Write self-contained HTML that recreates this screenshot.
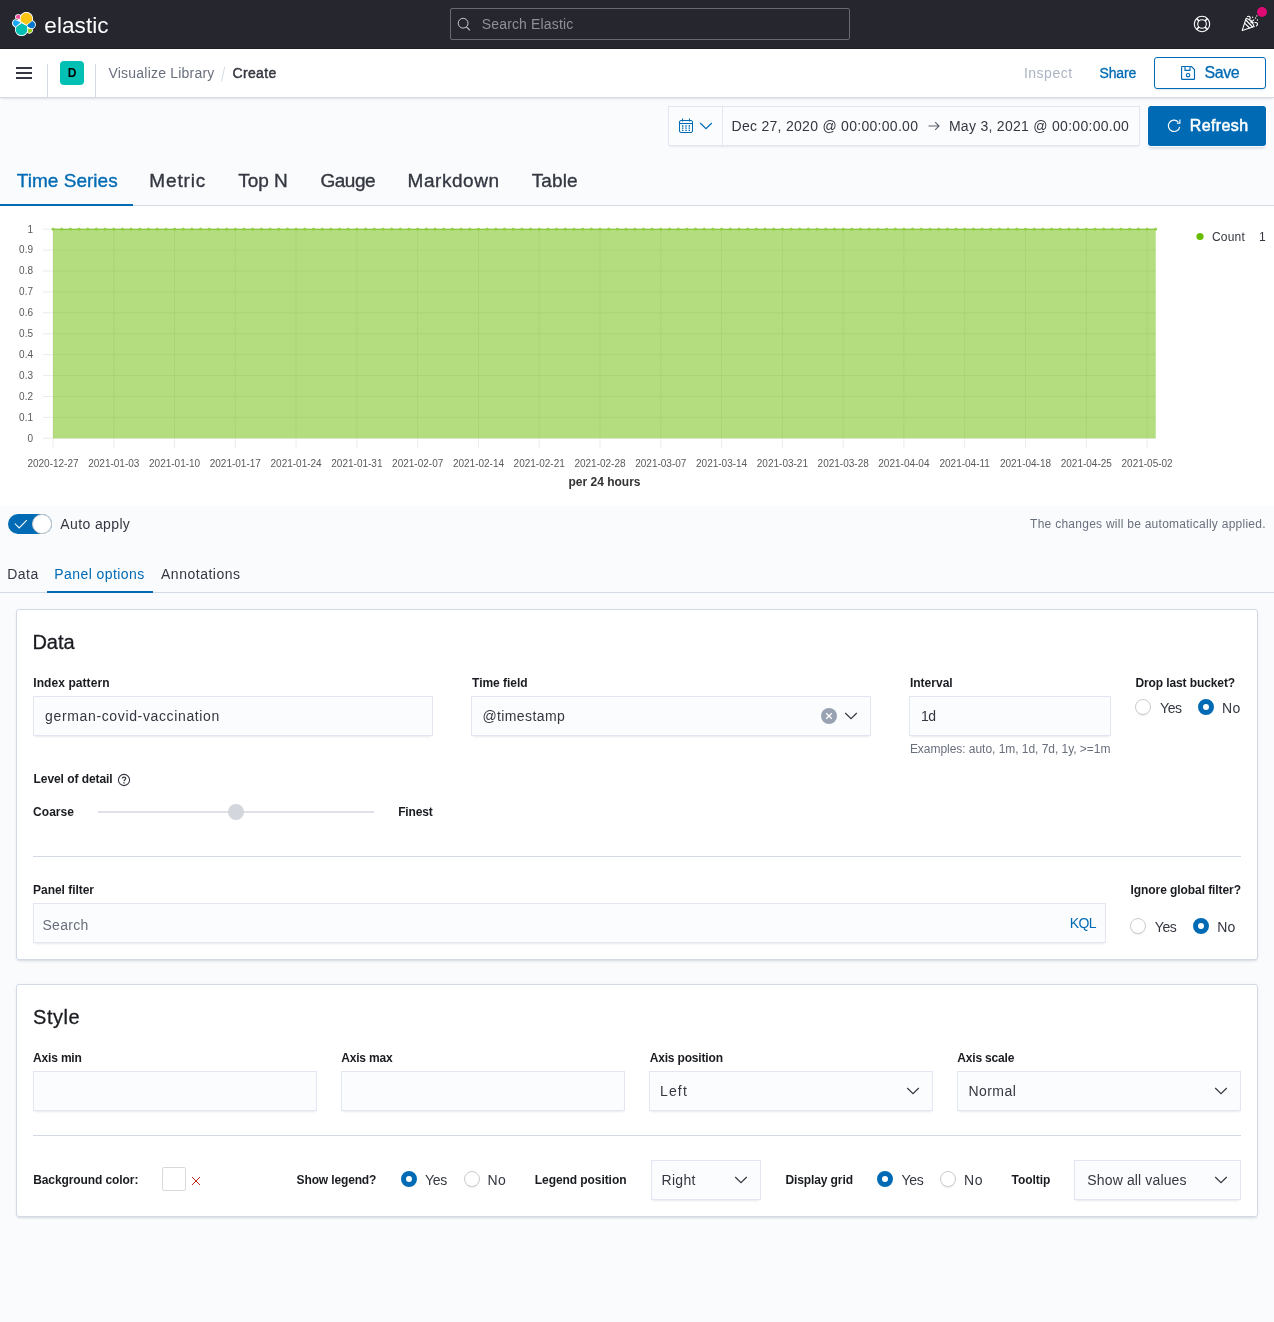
<!DOCTYPE html>
<html><head><meta charset="utf-8"><title>Kibana</title>
<style>
*{box-sizing:border-box;margin:0;padding:0}
html,body{width:1274px;height:1322px;overflow:hidden}
body{font-family:"Liberation Sans",sans-serif;background:#fafbfd;color:#343741;font-size:14px;position:relative}
.abs{position:absolute}
.t{position:absolute;white-space:nowrap;line-height:1}
#top{left:0;top:0;width:1274px;height:49px;background:#25262e;border-bottom:1px solid #1e1f25}
#sub{left:0;top:49px;width:1274px;height:49px;background:#fff;border-bottom:1px solid #d3dae6;box-shadow:0 2px 2px -1px rgba(152,162,179,.3)}
.inp{position:absolute;height:40px;background:#fbfcfd;box-shadow:0 1px 1px -1px rgba(152,162,179,.2),0 3px 2px -2px rgba(152,162,179,.2),inset 0 0 0 1px rgba(19,34,149,.1)}
.panel{position:absolute;background:#fff;border:1px solid #d3dae6;border-radius:3px;box-shadow:0 2px 2px -1px rgba(152,162,179,.3),0 1px 5px -2px rgba(152,162,179,.3)}
.hr{position:absolute;height:1px;background:#d3dae6}
.radio{position:absolute;width:16px;height:16px;border-radius:50%;border:1px solid #c9cbcd;background:#fff;box-shadow:0 1px 1px -1px rgba(152,162,179,.2),0 3px 2px -2px rgba(152,162,179,.2)}
.radio.on{border:5px solid #006bb4;box-shadow:none;background:#fff}
#root{position:absolute;left:0;top:0;width:1274px;height:1322px;will-change:transform}
</style></head><body><div id="root">

<!-- TOP DARK HEADER -->
<div id="top" class="abs"></div>
<div class="abs" style="left:450px;top:8px;width:400px;height:32px;border:1px solid #696a70;border-radius:2px;background:#25262e"></div>

<!-- SUB HEADER -->
<div id="sub" class="abs"></div>
<div class="abs" style="left:16px;top:67px;width:16px;height:2px;background:#343741;box-shadow:0 5px 0 #343741,0 10px 0 #343741"></div>
<div class="abs" style="left:47px;top:64px;width:1px;height:33px;background:#d3dae6"></div>
<div class="abs" style="left:95px;top:64px;width:1px;height:33px;background:#d3dae6"></div>
<div class="abs" style="left:60px;top:61px;width:24px;height:24px;border-radius:4px;background:#00bfb3"></div>
<div class="t" style="left:67.7px;top:67px;font-size:12px;font-weight:700;color:#000">D</div>
<svg class="abs" style="left:220px;top:66px" width="6" height="16" viewBox="0 0 6 16"><path d="M4.7 0.8 L1.5 15.7" stroke="#d3dae6" stroke-width="1"/></svg>
<div class="abs" style="left:1154px;top:57px;width:112px;height:32px;border:1px solid #006bb4;border-radius:3px;background:#fff;box-shadow:0 2px 2px -1px rgba(54,97,126,.15)"></div>

<!-- DATE PICKER -->
<div class="abs" style="left:668px;top:106px;width:472px;height:40px;background:#fbfcfd;box-shadow:0 1px 1px -1px rgba(152,162,179,.2),0 3px 2px -2px rgba(152,162,179,.2),inset 0 0 0 1px rgba(19,34,149,.1)"></div>
<div class="abs" style="left:722px;top:107px;width:1px;height:38px;background:rgba(19,34,149,.1)"></div>
<svg class="abs" style="left:927px;top:120px" width="14" height="12" viewBox="0 0 14 12" fill="none" stroke="#5a606b" stroke-width="1.1"><path d="M1.5 6 H12 M8.2 2.2 L12 6 L8.2 9.8"/></svg>
<div class="abs" style="left:1148px;top:106px;width:118px;height:40px;border-radius:3px;background:#006bb4;box-shadow:0 0 0 1px rgba(255,255,255,.9),0 3px 3px -1px rgba(54,97,126,.25)"></div>

<!-- VIS TABS -->
<div class="hr" style="left:0;top:205px;width:1274px"></div>
<div class="abs" style="left:0;top:204px;width:133px;height:2px;background:#006bb4"></div>

<!-- CHART BG -->
<div class="abs" style="left:0;top:206px;width:1274px;height:300px;background:#fff"></div>

<!-- AUTO APPLY -->
<div class="abs" style="left:8px;top:514px;width:44px;height:20px;border-radius:10px;background:#006bb4"></div>
<div class="abs" style="left:32px;top:514px;width:20px;height:20px;border-radius:10px;background:#fff;border:1px solid #c9cbcd"></div>
<svg class="abs" style="left:13px;top:518px" width="16" height="12" viewBox="0 0 16 12"><path d="M1.8 5.5 L6.2 9.9 L13.8 2.1" fill="none" stroke="#fff" stroke-width="1.05"/></svg>

<!-- SUB TABS -->
<div class="hr" style="left:0;top:592px;width:1274px"></div>
<div class="abs" style="left:47px;top:591px;width:106px;height:2px;background:#006bb4"></div>

<!-- DATA PANEL -->
<div class="panel" style="left:16px;top:609px;width:1242px;height:351px"></div>
<div class="inp" style="left:33px;top:696px;width:400px"></div>
<div class="inp" style="left:471px;top:696px;width:400px"></div>
<div class="inp" style="left:909px;top:696px;width:202px"></div>
<div class="radio" style="left:1135px;top:699px"></div>
<div class="radio on" style="left:1198px;top:699px"></div>
<div class="abs" style="left:98px;top:811px;width:276px;height:2px;background:#dfe1e6"></div>
<div class="abs" style="left:228px;top:804px;width:16px;height:16px;border-radius:8px;background:#d3d6dc"></div>
<div class="hr" style="left:33px;top:856px;width:1208px"></div>
<div class="inp" style="left:33px;top:903px;width:1073px;height:40px"></div>
<div class="radio" style="left:1130px;top:918px"></div>
<div class="radio on" style="left:1193px;top:918px"></div>

<!-- STYLE PANEL -->
<div class="panel" style="left:16px;top:984px;width:1242px;height:233px"></div>
<div class="inp" style="left:33px;top:1071px;width:284px"></div>
<div class="inp" style="left:341px;top:1071px;width:284px"></div>
<div class="inp" style="left:649px;top:1071px;width:284px"></div>
<div class="inp" style="left:957px;top:1071px;width:284px"></div>
<div class="hr" style="left:33px;top:1135px;width:1208px"></div>
<div class="abs" style="left:162px;top:1167px;width:24px;height:24px;border:1px solid #d9d9d9;border-radius:2px;background:#fff"></div>
<div class="radio on" style="left:401px;top:1171px"></div>
<div class="radio" style="left:464px;top:1171px"></div>
<div class="inp" style="left:651px;top:1160px;width:110px"></div>
<div class="radio on" style="left:877px;top:1171px"></div>
<div class="radio" style="left:940px;top:1171px"></div>
<div class="inp" style="left:1074px;top:1160px;width:167px"></div>

<svg class="abs" style="left:0;top:206px" width="1274" height="300" viewBox="0 206 1274 300" font-family="Liberation Sans, sans-serif">
<line x1="43" x2="1155.7" y1="229.2" y2="229.2" stroke="#ececec" stroke-width="1"/>
<line x1="43" x2="1155.7" y1="250.1" y2="250.1" stroke="#ececec" stroke-width="1"/>
<line x1="43" x2="1155.7" y1="271.0" y2="271.0" stroke="#ececec" stroke-width="1"/>
<line x1="43" x2="1155.7" y1="291.9" y2="291.9" stroke="#ececec" stroke-width="1"/>
<line x1="43" x2="1155.7" y1="312.8" y2="312.8" stroke="#ececec" stroke-width="1"/>
<line x1="43" x2="1155.7" y1="333.8" y2="333.8" stroke="#ececec" stroke-width="1"/>
<line x1="43" x2="1155.7" y1="354.7" y2="354.7" stroke="#ececec" stroke-width="1"/>
<line x1="43" x2="1155.7" y1="375.6" y2="375.6" stroke="#ececec" stroke-width="1"/>
<line x1="43" x2="1155.7" y1="396.5" y2="396.5" stroke="#ececec" stroke-width="1"/>
<line x1="43" x2="1155.7" y1="417.4" y2="417.4" stroke="#ececec" stroke-width="1"/>
<line x1="43" x2="1155.7" y1="438.3" y2="438.3" stroke="#ececec" stroke-width="1"/>
<line x1="53.0" x2="53.0" y1="229.2" y2="448.3" stroke="#ececec" stroke-width="1"/>
<line x1="113.8" x2="113.8" y1="229.2" y2="448.3" stroke="#ececec" stroke-width="1"/>
<line x1="174.6" x2="174.6" y1="229.2" y2="448.3" stroke="#ececec" stroke-width="1"/>
<line x1="235.3" x2="235.3" y1="229.2" y2="448.3" stroke="#ececec" stroke-width="1"/>
<line x1="296.1" x2="296.1" y1="229.2" y2="448.3" stroke="#ececec" stroke-width="1"/>
<line x1="356.9" x2="356.9" y1="229.2" y2="448.3" stroke="#ececec" stroke-width="1"/>
<line x1="417.7" x2="417.7" y1="229.2" y2="448.3" stroke="#ececec" stroke-width="1"/>
<line x1="478.5" x2="478.5" y1="229.2" y2="448.3" stroke="#ececec" stroke-width="1"/>
<line x1="539.2" x2="539.2" y1="229.2" y2="448.3" stroke="#ececec" stroke-width="1"/>
<line x1="600.0" x2="600.0" y1="229.2" y2="448.3" stroke="#ececec" stroke-width="1"/>
<line x1="660.8" x2="660.8" y1="229.2" y2="448.3" stroke="#ececec" stroke-width="1"/>
<line x1="721.6" x2="721.6" y1="229.2" y2="448.3" stroke="#ececec" stroke-width="1"/>
<line x1="782.4" x2="782.4" y1="229.2" y2="448.3" stroke="#ececec" stroke-width="1"/>
<line x1="843.2" x2="843.2" y1="229.2" y2="448.3" stroke="#ececec" stroke-width="1"/>
<line x1="903.9" x2="903.9" y1="229.2" y2="448.3" stroke="#ececec" stroke-width="1"/>
<line x1="964.7" x2="964.7" y1="229.2" y2="448.3" stroke="#ececec" stroke-width="1"/>
<line x1="1025.5" x2="1025.5" y1="229.2" y2="448.3" stroke="#ececec" stroke-width="1"/>
<line x1="1086.3" x2="1086.3" y1="229.2" y2="448.3" stroke="#ececec" stroke-width="1"/>
<line x1="1147.1" x2="1147.1" y1="229.2" y2="448.3" stroke="#ececec" stroke-width="1"/>
<rect x="53.0" y="229.2" width="1102.7" height="209.1" fill="#68bc00" fill-opacity="0.5"/>
<line x1="53.0" x2="1155.7" y1="229.2" y2="229.2" stroke="#68bc00" stroke-opacity="0.8" stroke-width="1"/>
<circle cx="53.0" cy="229.2" r="1.1" fill="#a5d760" stroke="#7cc522" stroke-width="0.7"/>
<circle cx="61.7" cy="229.2" r="1.1" fill="#a5d760" stroke="#7cc522" stroke-width="0.7"/>
<circle cx="70.4" cy="229.2" r="1.1" fill="#a5d760" stroke="#7cc522" stroke-width="0.7"/>
<circle cx="79.0" cy="229.2" r="1.1" fill="#a5d760" stroke="#7cc522" stroke-width="0.7"/>
<circle cx="87.7" cy="229.2" r="1.1" fill="#a5d760" stroke="#7cc522" stroke-width="0.7"/>
<circle cx="96.4" cy="229.2" r="1.1" fill="#a5d760" stroke="#7cc522" stroke-width="0.7"/>
<circle cx="105.1" cy="229.2" r="1.1" fill="#a5d760" stroke="#7cc522" stroke-width="0.7"/>
<circle cx="113.8" cy="229.2" r="1.1" fill="#a5d760" stroke="#7cc522" stroke-width="0.7"/>
<circle cx="122.5" cy="229.2" r="1.1" fill="#a5d760" stroke="#7cc522" stroke-width="0.7"/>
<circle cx="131.1" cy="229.2" r="1.1" fill="#a5d760" stroke="#7cc522" stroke-width="0.7"/>
<circle cx="139.8" cy="229.2" r="1.1" fill="#a5d760" stroke="#7cc522" stroke-width="0.7"/>
<circle cx="148.5" cy="229.2" r="1.1" fill="#a5d760" stroke="#7cc522" stroke-width="0.7"/>
<circle cx="157.2" cy="229.2" r="1.1" fill="#a5d760" stroke="#7cc522" stroke-width="0.7"/>
<circle cx="165.9" cy="229.2" r="1.1" fill="#a5d760" stroke="#7cc522" stroke-width="0.7"/>
<circle cx="174.6" cy="229.2" r="1.1" fill="#a5d760" stroke="#7cc522" stroke-width="0.7"/>
<circle cx="183.2" cy="229.2" r="1.1" fill="#a5d760" stroke="#7cc522" stroke-width="0.7"/>
<circle cx="191.9" cy="229.2" r="1.1" fill="#a5d760" stroke="#7cc522" stroke-width="0.7"/>
<circle cx="200.6" cy="229.2" r="1.1" fill="#a5d760" stroke="#7cc522" stroke-width="0.7"/>
<circle cx="209.3" cy="229.2" r="1.1" fill="#a5d760" stroke="#7cc522" stroke-width="0.7"/>
<circle cx="218.0" cy="229.2" r="1.1" fill="#a5d760" stroke="#7cc522" stroke-width="0.7"/>
<circle cx="226.7" cy="229.2" r="1.1" fill="#a5d760" stroke="#7cc522" stroke-width="0.7"/>
<circle cx="235.3" cy="229.2" r="1.1" fill="#a5d760" stroke="#7cc522" stroke-width="0.7"/>
<circle cx="244.0" cy="229.2" r="1.1" fill="#a5d760" stroke="#7cc522" stroke-width="0.7"/>
<circle cx="252.7" cy="229.2" r="1.1" fill="#a5d760" stroke="#7cc522" stroke-width="0.7"/>
<circle cx="261.4" cy="229.2" r="1.1" fill="#a5d760" stroke="#7cc522" stroke-width="0.7"/>
<circle cx="270.1" cy="229.2" r="1.1" fill="#a5d760" stroke="#7cc522" stroke-width="0.7"/>
<circle cx="278.8" cy="229.2" r="1.1" fill="#a5d760" stroke="#7cc522" stroke-width="0.7"/>
<circle cx="287.4" cy="229.2" r="1.1" fill="#a5d760" stroke="#7cc522" stroke-width="0.7"/>
<circle cx="296.1" cy="229.2" r="1.1" fill="#a5d760" stroke="#7cc522" stroke-width="0.7"/>
<circle cx="304.8" cy="229.2" r="1.1" fill="#a5d760" stroke="#7cc522" stroke-width="0.7"/>
<circle cx="313.5" cy="229.2" r="1.1" fill="#a5d760" stroke="#7cc522" stroke-width="0.7"/>
<circle cx="322.2" cy="229.2" r="1.1" fill="#a5d760" stroke="#7cc522" stroke-width="0.7"/>
<circle cx="330.9" cy="229.2" r="1.1" fill="#a5d760" stroke="#7cc522" stroke-width="0.7"/>
<circle cx="339.5" cy="229.2" r="1.1" fill="#a5d760" stroke="#7cc522" stroke-width="0.7"/>
<circle cx="348.2" cy="229.2" r="1.1" fill="#a5d760" stroke="#7cc522" stroke-width="0.7"/>
<circle cx="356.9" cy="229.2" r="1.1" fill="#a5d760" stroke="#7cc522" stroke-width="0.7"/>
<circle cx="365.6" cy="229.2" r="1.1" fill="#a5d760" stroke="#7cc522" stroke-width="0.7"/>
<circle cx="374.3" cy="229.2" r="1.1" fill="#a5d760" stroke="#7cc522" stroke-width="0.7"/>
<circle cx="383.0" cy="229.2" r="1.1" fill="#a5d760" stroke="#7cc522" stroke-width="0.7"/>
<circle cx="391.6" cy="229.2" r="1.1" fill="#a5d760" stroke="#7cc522" stroke-width="0.7"/>
<circle cx="400.3" cy="229.2" r="1.1" fill="#a5d760" stroke="#7cc522" stroke-width="0.7"/>
<circle cx="409.0" cy="229.2" r="1.1" fill="#a5d760" stroke="#7cc522" stroke-width="0.7"/>
<circle cx="417.7" cy="229.2" r="1.1" fill="#a5d760" stroke="#7cc522" stroke-width="0.7"/>
<circle cx="426.4" cy="229.2" r="1.1" fill="#a5d760" stroke="#7cc522" stroke-width="0.7"/>
<circle cx="435.1" cy="229.2" r="1.1" fill="#a5d760" stroke="#7cc522" stroke-width="0.7"/>
<circle cx="443.7" cy="229.2" r="1.1" fill="#a5d760" stroke="#7cc522" stroke-width="0.7"/>
<circle cx="452.4" cy="229.2" r="1.1" fill="#a5d760" stroke="#7cc522" stroke-width="0.7"/>
<circle cx="461.1" cy="229.2" r="1.1" fill="#a5d760" stroke="#7cc522" stroke-width="0.7"/>
<circle cx="469.8" cy="229.2" r="1.1" fill="#a5d760" stroke="#7cc522" stroke-width="0.7"/>
<circle cx="478.5" cy="229.2" r="1.1" fill="#a5d760" stroke="#7cc522" stroke-width="0.7"/>
<circle cx="487.1" cy="229.2" r="1.1" fill="#a5d760" stroke="#7cc522" stroke-width="0.7"/>
<circle cx="495.8" cy="229.2" r="1.1" fill="#a5d760" stroke="#7cc522" stroke-width="0.7"/>
<circle cx="504.5" cy="229.2" r="1.1" fill="#a5d760" stroke="#7cc522" stroke-width="0.7"/>
<circle cx="513.2" cy="229.2" r="1.1" fill="#a5d760" stroke="#7cc522" stroke-width="0.7"/>
<circle cx="521.9" cy="229.2" r="1.1" fill="#a5d760" stroke="#7cc522" stroke-width="0.7"/>
<circle cx="530.6" cy="229.2" r="1.1" fill="#a5d760" stroke="#7cc522" stroke-width="0.7"/>
<circle cx="539.2" cy="229.2" r="1.1" fill="#a5d760" stroke="#7cc522" stroke-width="0.7"/>
<circle cx="547.9" cy="229.2" r="1.1" fill="#a5d760" stroke="#7cc522" stroke-width="0.7"/>
<circle cx="556.6" cy="229.2" r="1.1" fill="#a5d760" stroke="#7cc522" stroke-width="0.7"/>
<circle cx="565.3" cy="229.2" r="1.1" fill="#a5d760" stroke="#7cc522" stroke-width="0.7"/>
<circle cx="574.0" cy="229.2" r="1.1" fill="#a5d760" stroke="#7cc522" stroke-width="0.7"/>
<circle cx="582.7" cy="229.2" r="1.1" fill="#a5d760" stroke="#7cc522" stroke-width="0.7"/>
<circle cx="591.3" cy="229.2" r="1.1" fill="#a5d760" stroke="#7cc522" stroke-width="0.7"/>
<circle cx="600.0" cy="229.2" r="1.1" fill="#a5d760" stroke="#7cc522" stroke-width="0.7"/>
<circle cx="608.7" cy="229.2" r="1.1" fill="#a5d760" stroke="#7cc522" stroke-width="0.7"/>
<circle cx="617.4" cy="229.2" r="1.1" fill="#a5d760" stroke="#7cc522" stroke-width="0.7"/>
<circle cx="626.1" cy="229.2" r="1.1" fill="#a5d760" stroke="#7cc522" stroke-width="0.7"/>
<circle cx="634.8" cy="229.2" r="1.1" fill="#a5d760" stroke="#7cc522" stroke-width="0.7"/>
<circle cx="643.4" cy="229.2" r="1.1" fill="#a5d760" stroke="#7cc522" stroke-width="0.7"/>
<circle cx="652.1" cy="229.2" r="1.1" fill="#a5d760" stroke="#7cc522" stroke-width="0.7"/>
<circle cx="660.8" cy="229.2" r="1.1" fill="#a5d760" stroke="#7cc522" stroke-width="0.7"/>
<circle cx="669.5" cy="229.2" r="1.1" fill="#a5d760" stroke="#7cc522" stroke-width="0.7"/>
<circle cx="678.2" cy="229.2" r="1.1" fill="#a5d760" stroke="#7cc522" stroke-width="0.7"/>
<circle cx="686.9" cy="229.2" r="1.1" fill="#a5d760" stroke="#7cc522" stroke-width="0.7"/>
<circle cx="695.5" cy="229.2" r="1.1" fill="#a5d760" stroke="#7cc522" stroke-width="0.7"/>
<circle cx="704.2" cy="229.2" r="1.1" fill="#a5d760" stroke="#7cc522" stroke-width="0.7"/>
<circle cx="712.9" cy="229.2" r="1.1" fill="#a5d760" stroke="#7cc522" stroke-width="0.7"/>
<circle cx="721.6" cy="229.2" r="1.1" fill="#a5d760" stroke="#7cc522" stroke-width="0.7"/>
<circle cx="730.3" cy="229.2" r="1.1" fill="#a5d760" stroke="#7cc522" stroke-width="0.7"/>
<circle cx="739.0" cy="229.2" r="1.1" fill="#a5d760" stroke="#7cc522" stroke-width="0.7"/>
<circle cx="747.6" cy="229.2" r="1.1" fill="#a5d760" stroke="#7cc522" stroke-width="0.7"/>
<circle cx="756.3" cy="229.2" r="1.1" fill="#a5d760" stroke="#7cc522" stroke-width="0.7"/>
<circle cx="765.0" cy="229.2" r="1.1" fill="#a5d760" stroke="#7cc522" stroke-width="0.7"/>
<circle cx="773.7" cy="229.2" r="1.1" fill="#a5d760" stroke="#7cc522" stroke-width="0.7"/>
<circle cx="782.4" cy="229.2" r="1.1" fill="#a5d760" stroke="#7cc522" stroke-width="0.7"/>
<circle cx="791.1" cy="229.2" r="1.1" fill="#a5d760" stroke="#7cc522" stroke-width="0.7"/>
<circle cx="799.7" cy="229.2" r="1.1" fill="#a5d760" stroke="#7cc522" stroke-width="0.7"/>
<circle cx="808.4" cy="229.2" r="1.1" fill="#a5d760" stroke="#7cc522" stroke-width="0.7"/>
<circle cx="817.1" cy="229.2" r="1.1" fill="#a5d760" stroke="#7cc522" stroke-width="0.7"/>
<circle cx="825.8" cy="229.2" r="1.1" fill="#a5d760" stroke="#7cc522" stroke-width="0.7"/>
<circle cx="834.5" cy="229.2" r="1.1" fill="#a5d760" stroke="#7cc522" stroke-width="0.7"/>
<circle cx="843.2" cy="229.2" r="1.1" fill="#a5d760" stroke="#7cc522" stroke-width="0.7"/>
<circle cx="851.8" cy="229.2" r="1.1" fill="#a5d760" stroke="#7cc522" stroke-width="0.7"/>
<circle cx="860.5" cy="229.2" r="1.1" fill="#a5d760" stroke="#7cc522" stroke-width="0.7"/>
<circle cx="869.2" cy="229.2" r="1.1" fill="#a5d760" stroke="#7cc522" stroke-width="0.7"/>
<circle cx="877.9" cy="229.2" r="1.1" fill="#a5d760" stroke="#7cc522" stroke-width="0.7"/>
<circle cx="886.6" cy="229.2" r="1.1" fill="#a5d760" stroke="#7cc522" stroke-width="0.7"/>
<circle cx="895.3" cy="229.2" r="1.1" fill="#a5d760" stroke="#7cc522" stroke-width="0.7"/>
<circle cx="903.9" cy="229.2" r="1.1" fill="#a5d760" stroke="#7cc522" stroke-width="0.7"/>
<circle cx="912.6" cy="229.2" r="1.1" fill="#a5d760" stroke="#7cc522" stroke-width="0.7"/>
<circle cx="921.3" cy="229.2" r="1.1" fill="#a5d760" stroke="#7cc522" stroke-width="0.7"/>
<circle cx="930.0" cy="229.2" r="1.1" fill="#a5d760" stroke="#7cc522" stroke-width="0.7"/>
<circle cx="938.7" cy="229.2" r="1.1" fill="#a5d760" stroke="#7cc522" stroke-width="0.7"/>
<circle cx="947.3" cy="229.2" r="1.1" fill="#a5d760" stroke="#7cc522" stroke-width="0.7"/>
<circle cx="956.0" cy="229.2" r="1.1" fill="#a5d760" stroke="#7cc522" stroke-width="0.7"/>
<circle cx="964.7" cy="229.2" r="1.1" fill="#a5d760" stroke="#7cc522" stroke-width="0.7"/>
<circle cx="973.4" cy="229.2" r="1.1" fill="#a5d760" stroke="#7cc522" stroke-width="0.7"/>
<circle cx="982.1" cy="229.2" r="1.1" fill="#a5d760" stroke="#7cc522" stroke-width="0.7"/>
<circle cx="990.8" cy="229.2" r="1.1" fill="#a5d760" stroke="#7cc522" stroke-width="0.7"/>
<circle cx="999.4" cy="229.2" r="1.1" fill="#a5d760" stroke="#7cc522" stroke-width="0.7"/>
<circle cx="1008.1" cy="229.2" r="1.1" fill="#a5d760" stroke="#7cc522" stroke-width="0.7"/>
<circle cx="1016.8" cy="229.2" r="1.1" fill="#a5d760" stroke="#7cc522" stroke-width="0.7"/>
<circle cx="1025.5" cy="229.2" r="1.1" fill="#a5d760" stroke="#7cc522" stroke-width="0.7"/>
<circle cx="1034.2" cy="229.2" r="1.1" fill="#a5d760" stroke="#7cc522" stroke-width="0.7"/>
<circle cx="1042.9" cy="229.2" r="1.1" fill="#a5d760" stroke="#7cc522" stroke-width="0.7"/>
<circle cx="1051.5" cy="229.2" r="1.1" fill="#a5d760" stroke="#7cc522" stroke-width="0.7"/>
<circle cx="1060.2" cy="229.2" r="1.1" fill="#a5d760" stroke="#7cc522" stroke-width="0.7"/>
<circle cx="1068.9" cy="229.2" r="1.1" fill="#a5d760" stroke="#7cc522" stroke-width="0.7"/>
<circle cx="1077.6" cy="229.2" r="1.1" fill="#a5d760" stroke="#7cc522" stroke-width="0.7"/>
<circle cx="1086.3" cy="229.2" r="1.1" fill="#a5d760" stroke="#7cc522" stroke-width="0.7"/>
<circle cx="1095.0" cy="229.2" r="1.1" fill="#a5d760" stroke="#7cc522" stroke-width="0.7"/>
<circle cx="1103.6" cy="229.2" r="1.1" fill="#a5d760" stroke="#7cc522" stroke-width="0.7"/>
<circle cx="1112.3" cy="229.2" r="1.1" fill="#a5d760" stroke="#7cc522" stroke-width="0.7"/>
<circle cx="1121.0" cy="229.2" r="1.1" fill="#a5d760" stroke="#7cc522" stroke-width="0.7"/>
<circle cx="1129.7" cy="229.2" r="1.1" fill="#a5d760" stroke="#7cc522" stroke-width="0.7"/>
<circle cx="1138.4" cy="229.2" r="1.1" fill="#a5d760" stroke="#7cc522" stroke-width="0.7"/>
<circle cx="1147.1" cy="229.2" r="1.1" fill="#a5d760" stroke="#7cc522" stroke-width="0.7"/>
<circle cx="1155.7" cy="229.2" r="1.1" fill="#a5d760" stroke="#7cc522" stroke-width="0.7"/>
<text x="33" y="232.5" font-size="10" fill="#5a5a5a" text-anchor="end">1</text>
<text x="33" y="253.4" font-size="10" fill="#5a5a5a" text-anchor="end">0.9</text>
<text x="33" y="274.3" font-size="10" fill="#5a5a5a" text-anchor="end">0.8</text>
<text x="33" y="295.2" font-size="10" fill="#5a5a5a" text-anchor="end">0.7</text>
<text x="33" y="316.1" font-size="10" fill="#5a5a5a" text-anchor="end">0.6</text>
<text x="33" y="337.1" font-size="10" fill="#5a5a5a" text-anchor="end">0.5</text>
<text x="33" y="358.0" font-size="10" fill="#5a5a5a" text-anchor="end">0.4</text>
<text x="33" y="378.9" font-size="10" fill="#5a5a5a" text-anchor="end">0.3</text>
<text x="33" y="399.8" font-size="10" fill="#5a5a5a" text-anchor="end">0.2</text>
<text x="33" y="420.7" font-size="10" fill="#5a5a5a" text-anchor="end">0.1</text>
<text x="33" y="441.6" font-size="10" fill="#5a5a5a" text-anchor="end">0</text>
<text x="53.0" y="466.8" font-size="10" fill="#5a5a5a" text-anchor="middle">2020-12-27</text>
<text x="113.8" y="466.8" font-size="10" fill="#5a5a5a" text-anchor="middle">2021-01-03</text>
<text x="174.6" y="466.8" font-size="10" fill="#5a5a5a" text-anchor="middle">2021-01-10</text>
<text x="235.3" y="466.8" font-size="10" fill="#5a5a5a" text-anchor="middle">2021-01-17</text>
<text x="296.1" y="466.8" font-size="10" fill="#5a5a5a" text-anchor="middle">2021-01-24</text>
<text x="356.9" y="466.8" font-size="10" fill="#5a5a5a" text-anchor="middle">2021-01-31</text>
<text x="417.7" y="466.8" font-size="10" fill="#5a5a5a" text-anchor="middle">2021-02-07</text>
<text x="478.5" y="466.8" font-size="10" fill="#5a5a5a" text-anchor="middle">2021-02-14</text>
<text x="539.2" y="466.8" font-size="10" fill="#5a5a5a" text-anchor="middle">2021-02-21</text>
<text x="600.0" y="466.8" font-size="10" fill="#5a5a5a" text-anchor="middle">2021-02-28</text>
<text x="660.8" y="466.8" font-size="10" fill="#5a5a5a" text-anchor="middle">2021-03-07</text>
<text x="721.6" y="466.8" font-size="10" fill="#5a5a5a" text-anchor="middle">2021-03-14</text>
<text x="782.4" y="466.8" font-size="10" fill="#5a5a5a" text-anchor="middle">2021-03-21</text>
<text x="843.2" y="466.8" font-size="10" fill="#5a5a5a" text-anchor="middle">2021-03-28</text>
<text x="903.9" y="466.8" font-size="10" fill="#5a5a5a" text-anchor="middle">2021-04-04</text>
<text x="964.7" y="466.8" font-size="10" fill="#5a5a5a" text-anchor="middle">2021-04-11</text>
<text x="1025.5" y="466.8" font-size="10" fill="#5a5a5a" text-anchor="middle">2021-04-18</text>
<text x="1086.3" y="466.8" font-size="10" fill="#5a5a5a" text-anchor="middle">2021-04-25</text>
<text x="1147.1" y="466.8" font-size="10" fill="#5a5a5a" text-anchor="middle">2021-05-02</text>
<text x="604.5" y="486" font-size="12" font-weight="700" fill="#333" text-anchor="middle">per 24 hours</text>
<circle cx="1200" cy="236.5" r="3.6" fill="#68bc00"/>
<text x="1259" y="241" font-size="12" fill="#343741">1</text>
</svg>
<!-- ICONS -->
<!-- elastic logo -->
<svg class="abs" style="left:12px;top:12px" width="24" height="24" viewBox="0 0 32 32"><g fill="none" fill-rule="evenodd">
<g fill="#fff" stroke="#fff" stroke-width="2.3" stroke-linejoin="round"><path d="M11.4 8.7 A7.74 7.74 0 0 1 26.9 8.7 L27 11.3 L19.4 17.1 L11.5 12.4 Z"/><path d="M5.5 20.3 L12.7 15 L19.8 18.7 L20.4 23.3 A7.7 7.7 0 0 1 5 23.3 Z"/><path d="M5.4 8.2 L5.3 6.2 Q5.3 4 7.6 4 L9.4 4.1 Q10.4 4.2 10.8 4.7 L10.5 9.3 Z"/><path d="M4.3 10.8 L10.8 13.2 L11 14.2 L5 19.8 C2.5 18.6 0.9 16.2 1.4 14.3 C1.5 12.4 2.7 10.9 4.3 10.8 Z"/><path d="M21.7 22.3 L26.6 22.9 C27.4 25.4 26 27.6 23.6 27.8 C22.7 27.9 21.8 27.6 21.2 27.2 Z"/><path d="M20.2 17.5 L26.9 12 C29.3 12.8 30.8 15 30.7 17.3 C30.6 19 29.6 20.5 28.2 21.3 L25 21.6 L21.4 19.5 Z"/><path d="M8 8 L12 12 L20 17 L22 23 L12 16 Z"/></g>
<path fill="#FEC514" d="M11.4 8.7 A7.74 7.74 0 0 1 26.9 8.7 L27 11.3 L19.4 17.1 L11.5 12.4 Z"/>
<path fill="#00BFB3" d="M5.5 20.3 L12.7 15 L19.8 18.7 L20.4 23.3 A7.7 7.7 0 0 1 5 23.3 Z"/>
<path fill="#F04E98" d="M5.4 8.2 L5.3 6.2 Q5.3 4 7.6 4 L9.4 4.1 Q10.4 4.2 10.8 4.7 L10.5 9.3 Z"/>
<path fill="#1BA9F5" d="M4.3 10.8 L10.8 13.2 L11 14.2 L5 19.8 C2.5 18.6 0.9 16.2 1.4 14.3 C1.5 12.4 2.7 10.9 4.3 10.8 Z"/>
<path fill="#93C90E" d="M21.7 22.3 L26.6 22.9 C27.4 25.4 26 27.6 23.6 27.8 C22.7 27.9 21.8 27.6 21.2 27.2 Z"/>
<path fill="#07C" d="M20.2 17.5 L26.9 12 C29.3 12.8 30.8 15 30.7 17.3 C30.6 19 29.6 20.5 28.2 21.3 L25 21.6 L21.4 19.5 Z"/>
</g></svg>
<!-- search icon -->
<svg class="abs" style="left:455px;top:16px" width="16" height="16" viewBox="0 0 16 16"><circle cx="8.1" cy="7.2" r="4.9" fill="none" stroke="#c8cad0" stroke-width="1"/><path d="M11.4 10.8 L14.9 14.4" stroke="#c8cad0" stroke-width="1.1" fill="none"/></svg>
<!-- help lifebuoy -->
<svg class="abs" style="left:1193px;top:15px" width="18" height="18" viewBox="0 0 18 18" fill="none" stroke="#fff" stroke-width="1.1"><circle cx="9" cy="9" r="7.7"/><circle cx="9" cy="9" r="4.3"/><path d="M3.6 3.6 L6 6 M14.4 3.6 L12 6 M3.6 14.4 L6 12 M14.4 14.4 L12 12" stroke-width="1.6"/></svg>
<!-- cheer -->
<svg class="abs" style="left:1241px;top:15px" width="18" height="18" viewBox="0 0 18 18" fill="none" stroke="#fff" stroke-width="1.1" stroke-linejoin="round" stroke-linecap="round"><path d="M5.2 3.2 L1.2 15.4 L13.2 11.6 C12 7.6 9 4.4 5.2 3.2 Z"/><path d="M3.6 8.2 L8.6 13 M4.8 5 L11.6 12 "/><path d="M6.5 1.6 C8.6 0.6 10 2.4 8.8 4.4"/><path d="M14 7.6 C16.4 7 17.4 9.4 15.6 10.8"/><path d="M10 7.6 L12.8 4.8 M10 7.6 L10.2 5.4 M10 7.6 L12.2 7.6"/><path d="M11.6 2.2 v0.1 M14.6 3 v0.1 M15.8 0.8 v0.1 M16.4 5 v0.1" stroke-width="1.3"/></svg>
<div class="abs" style="left:1257px;top:7px;width:10px;height:10px;border-radius:5px;background:#dd0a73"></div>
<!-- save icon -->
<svg class="abs" style="left:1180px;top:65px" width="16" height="16" viewBox="0 0 16 16" fill="none" stroke="#006bb4" stroke-width="1.15"><path d="M1.6 2.1 a0.6 0.6 0 0 1 .6 -.6 h9.3 l3 3 v9.3 a0.6 0.6 0 0 1 -.6 .6 h-11.7 a0.6 0.6 0 0 1 -.6 -.6 z"/><path d="M5 1.6 v3.8 h5 v-3.8"/><circle cx="8.1" cy="10.2" r="1.7"/></svg>
<!-- calendar -->
<svg class="abs" style="left:678px;top:118px" width="16" height="16" viewBox="0 0 16 16" fill="none" stroke="#006bb4" stroke-width="1"><rect x="1.5" y="2.5" width="13" height="12" rx="1.5"/><path d="M1.5 5.5 h13 M4.5 0.5 v3 M11.5 0.5 v3"/><path d="M4 8 h1.4 M7.3 8 h1.4 M10.6 8 h1.4 M4 10.2 h1.4 M7.3 10.2 h1.4 M10.6 10.2 h1.4 M4 12.4 h1.4 M7.3 12.4 h1.4 M10.6 12.4 h1.4" stroke-width="1.3"/></svg>
<svg class="abs" style="left:699px;top:121px" width="14" height="10" viewBox="0 0 14 10" fill="none" stroke="#006bb4" stroke-width="1.2"><path d="M1.2 2 L7 7.6 L12.8 2"/></svg>
<!-- refresh -->
<svg class="abs" style="left:1166px;top:118px" width="16" height="16" viewBox="0 0 16 16" fill="none" stroke="#fff" stroke-width="1.1"><path d="M12.2 3.9 A5.7 5.7 0 1 0 13.7 8.8"/><path d="M10.9 5.1 h3 v-3.7"/></svg>
<!-- clear -->
<svg class="abs" style="left:821px;top:708px" width="16" height="16" viewBox="0 0 16 16"><circle cx="8" cy="8" r="8" fill="#98a2b3"/><path d="M5.2 5.2 L10.8 10.8 M10.8 5.2 L5.2 10.8" stroke="#fff" stroke-width="1.3"/></svg>
<svg class="chev abs" style="left:844px;top:711px" width="14" height="10" viewBox="0 0 14 10" fill="none" stroke="#343741" stroke-width="1.2"><path d="M1.2 2 L7 7.6 L12.8 2"/></svg>
<!-- question -->
<svg class="abs" style="left:117px;top:773px" width="14" height="14" viewBox="0 0 14 14" fill="none" stroke="#343741" stroke-width="1.1"><circle cx="7" cy="7" r="5.6"/><path d="M5.3 5.6 C5.3 3.6 8.7 3.6 8.7 5.6 C8.7 6.8 7 6.8 7 8.2" stroke-width="1.2"/><path d="M7 9.3 v1.3" stroke-width="1.3"/></svg>
<!-- select chevrons -->
<svg class="abs" style="left:906px;top:1086px" width="14" height="10" viewBox="0 0 14 10" fill="none" stroke="#343741" stroke-width="1.2"><path d="M1.2 2 L7 7.6 L12.8 2"/></svg>
<svg class="abs" style="left:1214px;top:1086px" width="14" height="10" viewBox="0 0 14 10" fill="none" stroke="#343741" stroke-width="1.2"><path d="M1.2 2 L7 7.6 L12.8 2"/></svg>
<svg class="abs" style="left:734px;top:1175px" width="14" height="10" viewBox="0 0 14 10" fill="none" stroke="#343741" stroke-width="1.2"><path d="M1.2 2 L7 7.6 L12.8 2"/></svg>
<svg class="abs" style="left:1214px;top:1175px" width="14" height="10" viewBox="0 0 14 10" fill="none" stroke="#343741" stroke-width="1.2"><path d="M1.2 2 L7 7.6 L12.8 2"/></svg>
<!-- red x -->
<svg class="abs" style="left:191px;top:1176px" width="10" height="10" viewBox="0 0 10 10" stroke="#bd271e" stroke-width="1" fill="none"><path d="M1 1 L9 9 M9 1 L1 9"/></svg>

<div class="t" style="left:44.3px;top:14.5px;font-size:22.5px;color:#fff;letter-spacing:0.08px">elastic</div>
<div class="t" style="left:481.8px;top:17.0px;font-size:14px;color:#8e9099;letter-spacing:0.15px">Search Elastic</div>
<div class="t" style="left:108.5px;top:65.9px;font-size:14px;color:#69707d;letter-spacing:0.21px">Visualize Library</div>
<div class="t" style="left:232.5px;top:65.9px;font-size:14px;-webkit-text-stroke:0.45px #343741;color:#343741;letter-spacing:0.35px">Create</div>
<div class="t" style="left:1023.9px;top:65.9px;font-size:14px;color:#abb4c4;letter-spacing:0.51px">Inspect</div>
<div class="t" style="left:1099.5px;top:65.9px;font-size:14px;-webkit-text-stroke:0.3px #006bb4;color:#006bb4;letter-spacing:-0.17px">Share</div>
<div class="t" style="left:1204.5px;top:64.5px;font-size:16px;-webkit-text-stroke:0.3px #006bb4;color:#006bb4;letter-spacing:-0.46px">Save</div>
<div class="t" style="left:731.5px;top:118.8px;font-size:14px;color:#343741;letter-spacing:0.29px">Dec 27, 2020 @ 00:00:00.00</div>
<div class="t" style="left:948.9px;top:118.8px;font-size:14px;color:#343741;letter-spacing:0.29px">May 3, 2021 @ 00:00:00.00</div>
<div class="t" style="left:1189.7px;top:117.5px;font-size:16px;-webkit-text-stroke:0.55px #fff;color:#fff;letter-spacing:0.41px">Refresh</div>
<div class="t" style="left:16.8px;top:171.1px;font-size:19px;-webkit-text-stroke:0.35px #006bb4;color:#006bb4;letter-spacing:0.02px">Time Series</div>
<div class="t" style="left:149.3px;top:171.1px;font-size:19px;-webkit-text-stroke:0.35px #343741;color:#343741;letter-spacing:0.86px">Metric</div>
<div class="t" style="left:238.2px;top:171.1px;font-size:19px;-webkit-text-stroke:0.35px #343741;color:#343741;letter-spacing:-0.05px">Top N</div>
<div class="t" style="left:320.6px;top:171.1px;font-size:19px;-webkit-text-stroke:0.35px #343741;color:#343741;letter-spacing:-0.54px">Gauge</div>
<div class="t" style="left:407.5px;top:171.1px;font-size:19px;-webkit-text-stroke:0.35px #343741;color:#343741;letter-spacing:0.56px">Markdown</div>
<div class="t" style="left:531.7px;top:171.1px;font-size:19px;-webkit-text-stroke:0.35px #343741;color:#343741;letter-spacing:0.14px">Table</div>
<div class="t" style="left:60.3px;top:517.0px;font-size:14px;color:#343741;letter-spacing:0.38px">Auto apply</div>
<div class="t" style="left:1030.1px;top:517.6px;font-size:12px;color:#69707d;letter-spacing:0.26px">The changes will be automatically applied.</div>
<div class="t" style="left:7.3px;top:567.2px;font-size:14px;color:#343741;letter-spacing:0.44px">Data</div>
<div class="t" style="left:54.3px;top:567.2px;font-size:14px;color:#006bb4;letter-spacing:0.42px">Panel options</div>
<div class="t" style="left:161.0px;top:567.2px;font-size:14px;color:#343741;letter-spacing:0.51px">Annotations</div>
<div class="t" style="left:32.4px;top:632.1px;font-size:20px;-webkit-text-stroke:0.3px #1a1c21;color:#1a1c21;letter-spacing:-0.04px">Data</div>
<div class="t" style="left:33.3px;top:676.9px;font-size:12px;font-weight:700;color:#1a1c21;letter-spacing:0.07px">Index pattern</div>
<div class="t" style="left:45.1px;top:708.9px;font-size:14px;color:#343741;letter-spacing:0.64px">german-covid-vaccination</div>
<div class="t" style="left:472.1px;top:676.9px;font-size:12px;font-weight:700;color:#1a1c21;letter-spacing:-0.03px">Time field</div>
<div class="t" style="left:482.4px;top:708.9px;font-size:14px;color:#343741;letter-spacing:0.40px">@timestamp</div>
<div class="t" style="left:909.9px;top:676.9px;font-size:12px;font-weight:700;color:#1a1c21;letter-spacing:0.01px">Interval</div>
<div class="t" style="left:921.0px;top:708.9px;font-size:14px;color:#343741;letter-spacing:-0.49px">1d</div>
<div class="t" style="left:909.9px;top:743.2px;font-size:12px;color:#69707d;letter-spacing:-0.04px">Examples: auto, 1m, 1d, 7d, 1y, &gt;=1m</div>
<div class="t" style="left:1135.4px;top:676.9px;font-size:12px;font-weight:700;color:#1a1c21;letter-spacing:-0.10px">Drop last bucket?</div>
<div class="t" style="left:1160.0px;top:701.0px;font-size:14px;color:#343741;letter-spacing:-0.42px">Yes</div>
<div class="t" style="left:1222.0px;top:701.0px;font-size:14px;color:#343741;letter-spacing:0.39px">No</div>
<div class="t" style="left:33.5px;top:772.7px;font-size:12px;font-weight:700;color:#1a1c21;letter-spacing:-0.06px">Level of detail</div>
<div class="t" style="left:33.1px;top:805.7px;font-size:12px;font-weight:700;color:#1a1c21;letter-spacing:0.02px">Coarse</div>
<div class="t" style="left:398.2px;top:805.7px;font-size:12px;font-weight:700;color:#1a1c21;letter-spacing:-0.15px">Finest</div>
<div class="t" style="left:33.1px;top:883.6px;font-size:12px;font-weight:700;color:#1a1c21;letter-spacing:-0.04px">Panel filter</div>
<div class="t" style="left:42.5px;top:918.0px;font-size:14px;color:#69707d;letter-spacing:0.27px">Search</div>
<div class="t" style="left:1069.7px;top:916.0px;font-size:14px;color:#006bb4;letter-spacing:-0.60px">KQL</div>
<div class="t" style="left:1130.6px;top:884.0px;font-size:12px;font-weight:700;color:#1a1c21;letter-spacing:-0.08px">Ignore global filter?</div>
<div class="t" style="left:1154.8px;top:920.0px;font-size:14px;color:#343741;letter-spacing:-0.42px">Yes</div>
<div class="t" style="left:1217.2px;top:920.0px;font-size:14px;color:#343741;letter-spacing:0.29px">No</div>
<div class="t" style="left:33.1px;top:1006.6px;font-size:20px;-webkit-text-stroke:0.3px #1a1c21;color:#1a1c21;letter-spacing:0.49px">Style</div>
<div class="t" style="left:33.1px;top:1051.6px;font-size:12px;font-weight:700;color:#1a1c21;letter-spacing:-0.18px">Axis min</div>
<div class="t" style="left:341.2px;top:1051.6px;font-size:12px;font-weight:700;color:#1a1c21;letter-spacing:-0.18px">Axis max</div>
<div class="t" style="left:649.7px;top:1051.6px;font-size:12px;font-weight:700;color:#1a1c21;letter-spacing:-0.17px">Axis position</div>
<div class="t" style="left:957.3px;top:1051.6px;font-size:12px;font-weight:700;color:#1a1c21;letter-spacing:-0.18px">Axis scale</div>
<div class="t" style="left:659.9px;top:1083.9px;font-size:14px;color:#343741;letter-spacing:1.20px">Left</div>
<div class="t" style="left:968.4px;top:1083.9px;font-size:14px;color:#343741;letter-spacing:0.46px">Normal</div>
<div class="t" style="left:33.2px;top:1174.1px;font-size:12px;font-weight:700;color:#1a1c21;letter-spacing:-0.09px">Background color:</div>
<div class="t" style="left:296.6px;top:1174.1px;font-size:12px;font-weight:700;color:#1a1c21;letter-spacing:-0.14px">Show legend?</div>
<div class="t" style="left:425.0px;top:1173.0px;font-size:14px;color:#343741;letter-spacing:-0.27px">Yes</div>
<div class="t" style="left:487.5px;top:1173.0px;font-size:14px;color:#343741;letter-spacing:0.39px">No</div>
<div class="t" style="left:534.8px;top:1174.1px;font-size:12px;font-weight:700;color:#1a1c21;letter-spacing:-0.07px">Legend position</div>
<div class="t" style="left:661.6px;top:1173.0px;font-size:14px;color:#343741;letter-spacing:0.28px">Right</div>
<div class="t" style="left:785.4px;top:1174.1px;font-size:12px;font-weight:700;color:#1a1c21;letter-spacing:-0.10px">Display grid</div>
<div class="t" style="left:901.5px;top:1173.0px;font-size:14px;color:#343741;letter-spacing:-0.27px">Yes</div>
<div class="t" style="left:964.0px;top:1173.0px;font-size:14px;color:#343741;letter-spacing:0.59px">No</div>
<div class="t" style="left:1011.5px;top:1174.1px;font-size:12px;font-weight:700;color:#1a1c21;letter-spacing:-0.04px">Tooltip</div>
<div class="t" style="left:1087.3px;top:1173.0px;font-size:14px;color:#343741;letter-spacing:0.14px">Show all values</div>
<div class="t" style="left:1212.0px;top:230.6px;font-size:12px;color:#343741;letter-spacing:0.20px">Count</div>

</div></body></html>
